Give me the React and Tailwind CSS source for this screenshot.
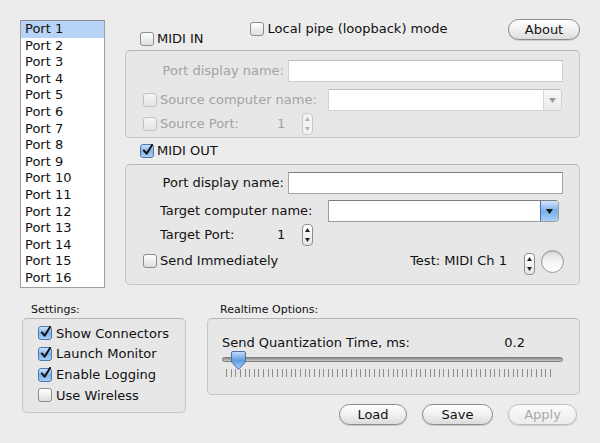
import React from 'react';

const ports = Array.from({ length: 16 }, (_, i) => `Port ${i + 1}`);

const Checkbox = ({ checked, disabled }) => (
    <span
        className={`inline-flex items-center justify-center w-[14px] h-[14px] rounded-[3px] border shrink-0 ${
            checked
                ? 'border-[#4a78b0] bg-gradient-to-b from-[#cfe4fb] via-[#7fb2ea] to-[#a9d0f6]'
                : disabled
                ? 'border-[#c2c2c2] bg-gradient-to-b from-[#f4f4f4] to-[#e4e4e4]'
                : 'border-[#8d8d8d] bg-gradient-to-b from-[#ffffff] to-[#dedede]'
        }`}
    >
        {checked && (
            <svg width="12" height="12" viewBox="0 0 12 12" className="-mt-[3px] ml-[1px]">
                <path d="M2 6.5 L5 10 L11 0.5" fill="none" stroke="#111" strokeWidth="2.2" strokeLinecap="round" strokeLinejoin="round" />
            </svg>
        )}
    </span>
);

const Stepper = ({ disabled }) => (
    <span className={`inline-flex flex-col items-center justify-between w-[11px] h-[22px] rounded-[4px] border py-[3px] ${disabled ? 'border-[#c6c6c6] bg-[#f3f3f3]' : 'border-[#8f8f8f] bg-gradient-to-b from-white to-[#e6e6e6]'}`}>
        <svg width="5" height="4" viewBox="0 0 5 4"><path d="M2.5 0 L5 4 L0 4 Z" fill={disabled ? '#b0b0b0' : '#222'} /></svg>
        <svg width="5" height="4" viewBox="0 0 5 4"><path d="M0 0 L5 0 L2.5 4 Z" fill={disabled ? '#b0b0b0' : '#222'} /></svg>
    </span>
);

const TextInput = ({ className = '', disabled }) => (
    <div className={`h-[22px] bg-white border ${disabled ? 'border-[#cfcfcf] border-t-[#bdbdbd]' : 'border-[#a6a6a6] border-t-[#7d7d7d]'} ${className}`} />
);

const Combo = ({ className = '', disabled }) => (
    <div className={`h-[22px] flex bg-white border ${disabled ? 'border-[#d0d0d0] border-t-[#bdbdbd]' : 'border-[#9c9c9c] border-t-[#7d7d7d]'} rounded-r-[4px] ${className}`}>
        <div className="flex-1" />
        <div
            className={`w-[18px] flex items-center justify-center rounded-r-[3px] border-l ${
                disabled
                    ? 'border-[#d6d6d6] bg-gradient-to-b from-[#f8f8f8] to-[#ebebeb]'
                    : 'border-[#3f6fb0] bg-gradient-to-b from-[#d3e6fb] via-[#78aee8] to-[#a8d0f7]'
            }`}
        >
            <svg width="7" height="5" viewBox="0 0 7 5"><path d="M0 0 L7 0 L3.5 5 Z" fill={disabled ? '#9a9a9a' : '#111'} /></svg>
        </div>
    </div>
);

const AquaButton = ({ children, className = '', disabled }) => (
    <button
        className={`h-[21px] rounded-full border text-[13px] leading-none flex items-center justify-center shadow-[0_1px_1px_rgba(0,0,0,0.15)] ${
            disabled
                ? 'border-[#bdbdbd] text-[#a9a9a9] bg-gradient-to-b from-[#fbfbfb] to-[#ececec]'
                : 'border-[#8a8a8a] text-[#111] bg-gradient-to-b from-[#ffffff] via-[#f0f0f0] to-[#dcdcdc]'
        } ${className}`}
    >
        {children}
    </button>
);

const GroupBox = ({ children, className = '' }) => (
    <div className={`rounded-[5px] border border-[#c5c5c5] border-t-[#b5b5b5] bg-[#e7e7e7] ${className}`}>{children}</div>
);

function App() {
    return (
        <div
            className="w-[600px] h-[443px] bg-[#ececec] text-[13px] text-[#111] overflow-hidden"
            style={{ fontFamily: '"DejaVu Sans", "Liberation Sans", sans-serif' }}
        >
            {/* Top area */}
            <div className="flex pt-[19px] pl-[20px]">
                {/* Port list */}
                <div className="w-[85px] h-[268px] mt-[1px] bg-white border border-[#9e9e9e] border-t-[#8a8a8a]">
                    {ports.map((p, i) => (
                        <div key={p} className={`h-[16.6px] leading-[16.6px] pl-[4px] ${i === 0 ? 'bg-[#b7d3f5]' : ''}`}>
                            {p}
                        </div>
                    ))}
                </div>

                {/* Right column */}
                <div className="ml-[20px] w-[455px]">
                    <div className="flex items-start h-[31px]">
                        <label className="flex items-center gap-[3px] mt-[10px] ml-[15px]">
                            <Checkbox />
                            <span>MIDI IN</span>
                        </label>
                        <label className="flex items-center gap-[4px] mt-[0px] ml-[46px]">
                            <Checkbox />
                            <span>Local pipe (loopback) mode</span>
                        </label>
                        <AquaButton className="ml-auto w-[72px]">About</AquaButton>
                    </div>

                    {/* MIDI IN box */}
                    <GroupBox className="h-[88px] text-[#a3a3a3] pt-[9px]">
                        <div className="flex items-center h-[22px]">
                            <span className="w-[162px] text-right pr-[4px]">Port display name:</span>
                            <TextInput disabled className="w-[275px]" />
                        </div>
                        <div className="flex items-center h-[22px] mt-[7px] pl-[17px]">
                            <Checkbox disabled />
                            <span className="ml-[3px] w-[168px]">Source computer name:</span>
                            <Combo disabled className="w-[234px]" />
                        </div>
                        <div className="flex items-center h-[24px] mt-[1px] pl-[17px]">
                            <Checkbox disabled />
                            <span className="ml-[3px] w-[117px]">Source Port:</span>
                            <span className="w-[25px]">1</span>
                            <Stepper disabled />
                        </div>
                    </GroupBox>

                    <label className="flex items-center gap-[3px] ml-[15px] h-[16px] mt-[5px]">
                        <Checkbox checked />
                        <span>MIDI OUT</span>
                    </label>

                    {/* MIDI OUT box */}
                    <GroupBox className="h-[121px] mt-[5px] pt-[7px]">
                        <div className="flex items-center h-[22px]">
                            <span className="w-[162px] text-right pr-[4px]">Port display name:</span>
                            <TextInput className="w-[275px]" />
                        </div>
                        <div className="flex items-center h-[22px] mt-[6px] pl-[34px]">
                            <span className="w-[168px]">Target computer name:</span>
                            <Combo className="w-[231px]" />
                        </div>
                        <div className="flex items-center h-[24px] mt-[1px] pl-[34px]">
                            <span className="w-[117px]">Target Port:</span>
                            <span className="w-[25px]">1</span>
                            <Stepper />
                        </div>
                        <div className="flex items-center h-[26px] mt-[1px] pl-[17px] pr-[15px]">
                            <Checkbox />
                            <span className="ml-[3px]">Send Immediately</span>
                            <span className="ml-auto">Test: MIDI Ch 1</span>
                            <span className="ml-[17px]"><Stepper /></span>
                            <span className="ml-[6px] w-[23px] h-[23px] rounded-full border border-[#9a9a9a] bg-gradient-to-b from-[#dcdcdc] via-[#f4f4f4] to-[#ffffff] shadow-[inset_0_1px_1px_rgba(0,0,0,0.15)]" />
                        </div>
                    </GroupBox>
                </div>
            </div>

            {/* Bottom area */}
            <div className="flex pl-[22px] mt-[15px]">
                <div className="w-[164px]">
                    <div className="text-[11px] pl-[9px] h-[14px] leading-[14px]">Settings:</div>
                    <GroupBox className="h-[95px] mt-[1px] pt-[4px] pl-[15px]">
                        {[
                            ['Show Connectors', true],
                            ['Launch Monitor', true],
                            ['Enable Logging', true],
                            ['Use Wireless', false],
                        ].map(([t, c]) => (
                            <label key={t} className="flex items-center gap-[4px] h-[20.7px]">
                                <Checkbox checked={c} />
                                <span>{t}</span>
                            </label>
                        ))}
                    </GroupBox>
                </div>

                <div className="ml-[21px] w-[373px]">
                    <div className="text-[11px] pl-[13px] h-[14px] leading-[14px]">Realtime Options:</div>
                    <GroupBox className="h-[77px] mt-[1px] pt-[16px] px-[14px]">
                        <div className="flex items-center h-[16px] pr-[40px]">
                            <span>Send Quantization Time, ms:</span>
                            <span className="ml-auto">0.2</span>
                        </div>
                        {/* Slider */}
                        <div className="relative h-[30px] -mt-[3px]">
                            <div className="absolute left-0 right-[2px] top-[9px] h-[5px] rounded-full bg-gradient-to-b from-[#8b8b8b] to-[#c9c9c9] border border-[#7d7d7d]" />
                            <svg className="absolute left-[9px] top-[3px]" width="15" height="19" viewBox="0 0 15 19">
                                <defs>
                                    <linearGradient id="thumb" x1="0" y1="0" x2="0" y2="1">
                                        <stop offset="0" stopColor="#c9e0fa" />
                                        <stop offset="0.5" stopColor="#5f9be0" />
                                        <stop offset="1" stopColor="#a9d0f6" />
                                    </linearGradient>
                                </defs>
                                <path d="M2 0.5 H13 Q14.5 0.5 14.5 2 V11 L7.5 18.5 L0.5 11 V2 Q0.5 0.5 2 0.5 Z" fill="url(#thumb)" stroke="#4a72a8" strokeWidth="1" />
                            </svg>
                            <div className="absolute left-[4px] right-[14px] top-[21px] flex justify-between">
                                {Array.from({ length: 71 }).map((_, i) => (
                                    <span key={i} className="w-[1px] h-[8px] bg-[#8c8c8c]" />
                                ))}
                            </div>
                        </div>
                    </GroupBox>
                    <div className="flex justify-end gap-[15px] mt-[9px] pr-[3px]">
                        <AquaButton className="w-[68px]">Load</AquaButton>
                        <AquaButton className="w-[71px]">Save</AquaButton>
                        <AquaButton disabled className="w-[69px]">Apply</AquaButton>
                    </div>
                </div>
            </div>
        </div>
    );
}

export default App;
